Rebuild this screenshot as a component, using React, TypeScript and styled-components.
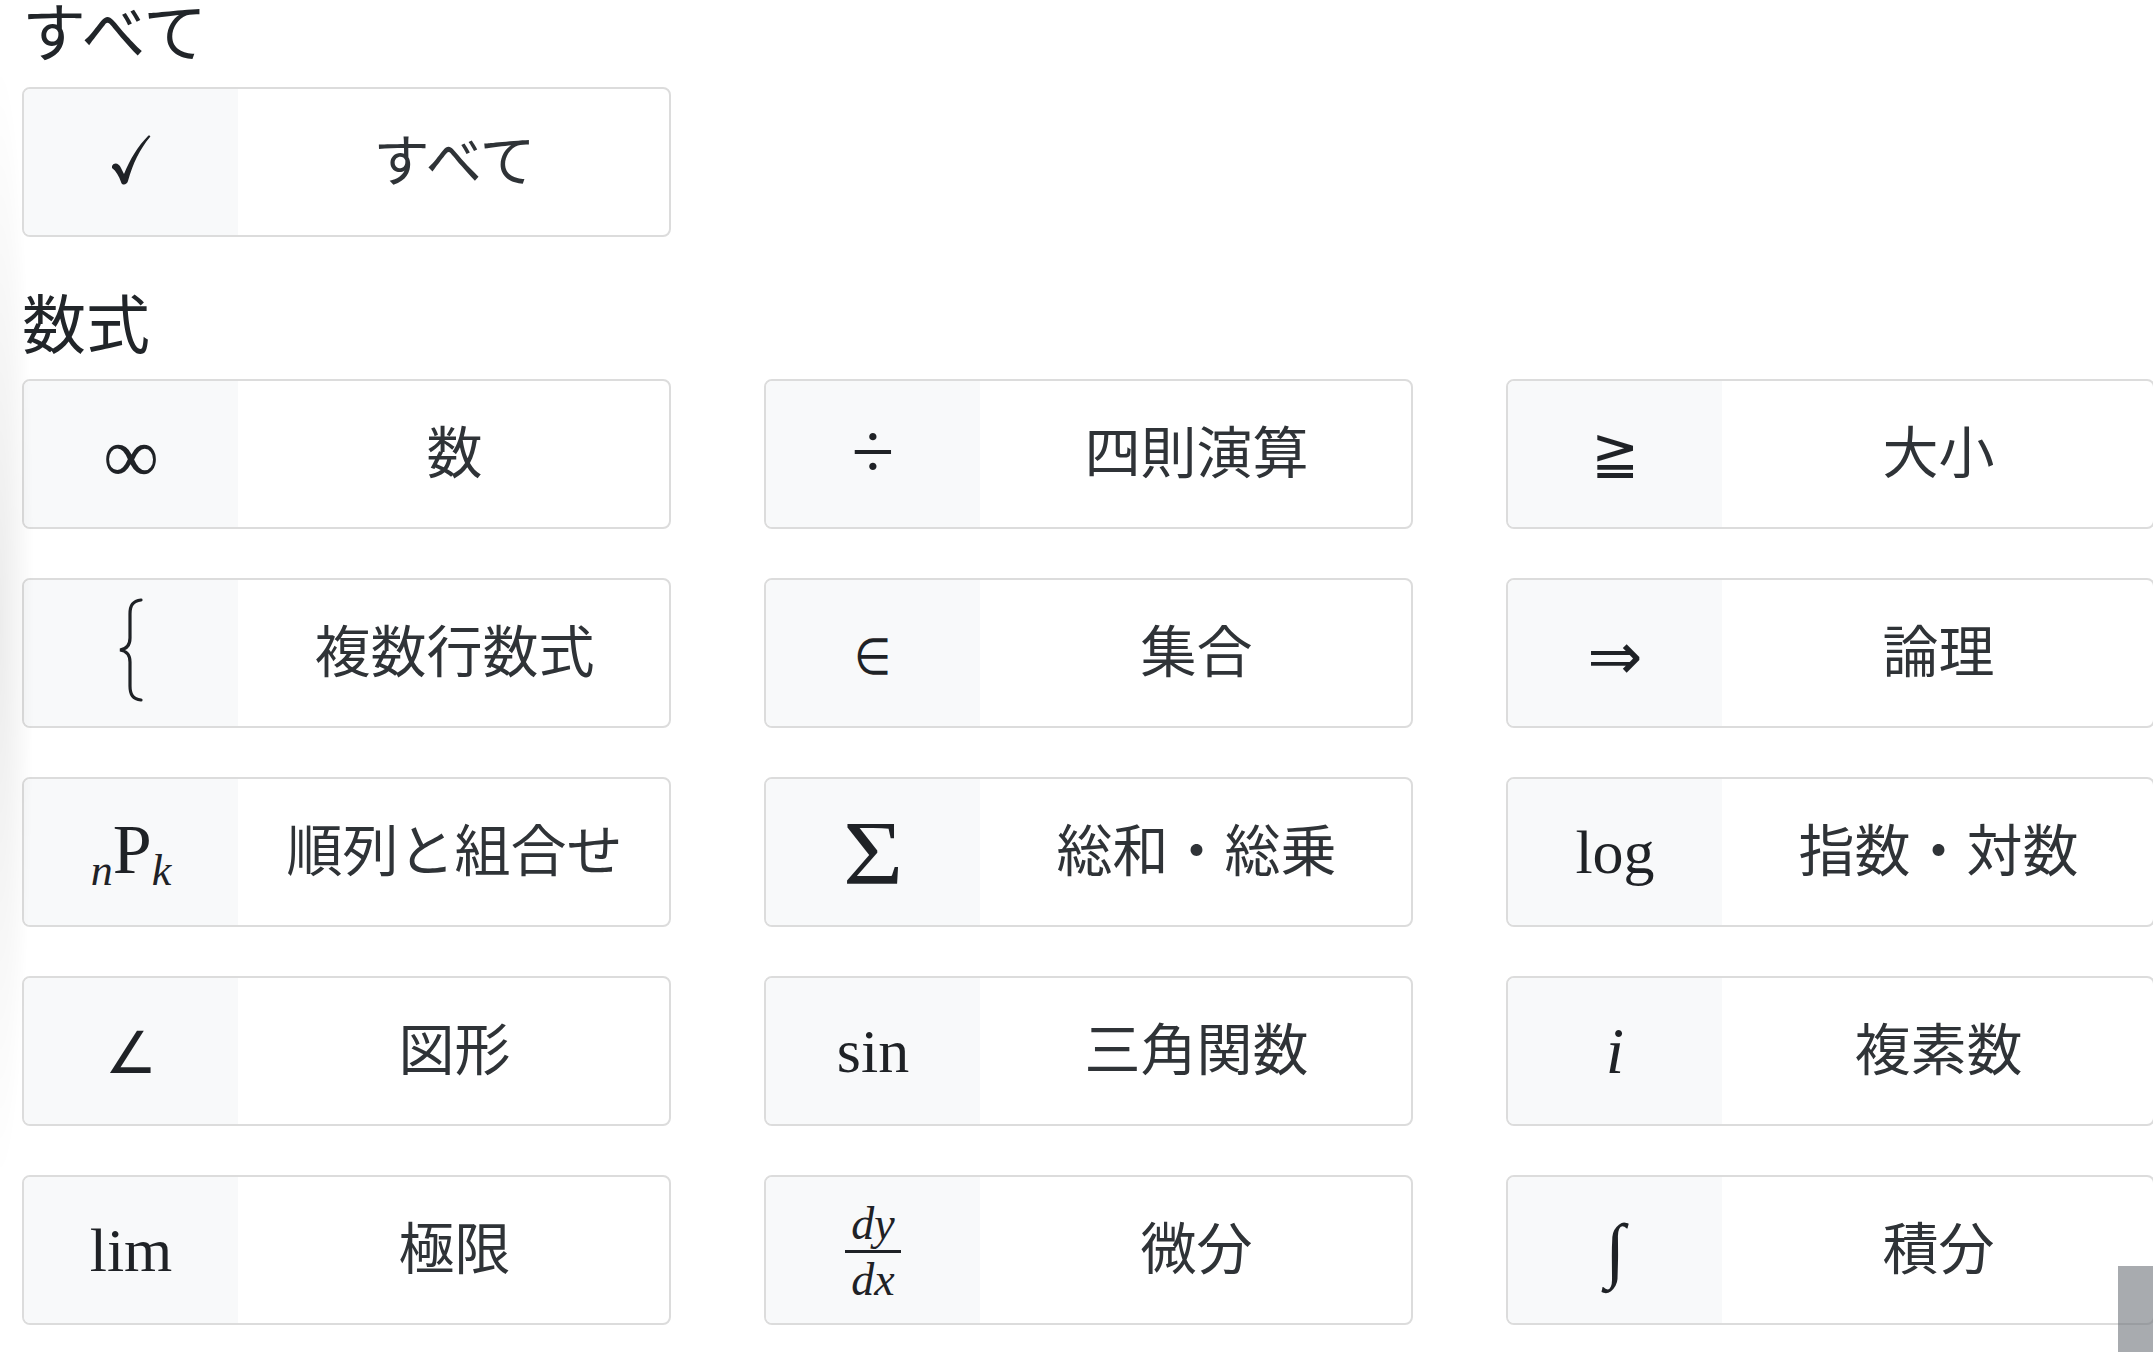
import React from "react";
import styled, { createGlobalStyle } from "styled-components";

const GlobalStyle = createGlobalStyle`
  html, body {
    margin: 0;
    padding: 0;
    background: #fff;
    overflow: hidden;
  }
  body {
    font-family: "Noto Sans CJK JP", "Noto Sans", sans-serif;
    color: #212529;
  }
`;

const Page = styled.div`
  padding: 0 0 0 22px;
  margin-top: -10px;
  width: 2200px;
`;

const Section = styled.section`
  margin-bottom: 45px;
`;

const Heading = styled.h4`
  margin: 0 0 20px;
  font-size: 64px;
  line-height: 1.2;
  font-weight: 400;
  color: #212529;
`;

const Grid = styled.div`
  display: grid;
  grid-template-columns: repeat(3, 649px);
  column-gap: 93px;
  row-gap: 49px;
`;

const Card = styled.div`
  box-sizing: border-box;
  height: 150px;
  display: grid;
  grid-template-columns: 214px 1fr;
  border: 2px solid #dcdcdc;
  border-radius: 8px;
  overflow: hidden;
  background: #fff;
`;

const IconCell = styled.div`
  background: #f8f9fa;
  display: flex;
  align-items: center;
  justify-content: center;
  color: #1f2226;
`;

const Label = styled.div`
  display: flex;
  align-items: center;
  justify-content: center;
  padding: 0 0 10px 2px;
  font-size: 56px;
  color: #2f3337;
  white-space: nowrap;
`;

const Sym = styled.span<{
  $size?: number;
  $italic?: boolean;
  $sans?: boolean;
  $dy?: number;
  $sx?: number;
}>`
  font-family: ${(p) =>
    p.$sans ? '"DejaVu Sans", sans-serif' : '"Liberation Serif", "DejaVu Serif", serif'};
  font-size: ${(p) => p.$size ?? 62}px;
  font-style: ${(p) => (p.$italic ? "italic" : "normal")};
  line-height: 1;
  display: inline-block;
  transform: translateY(${(p) => p.$dy ?? 0}px) scaleX(${(p) => p.$sx ?? 1});
`;

const Perm = styled.span`
  font-family: "Liberation Serif", "DejaVu Serif", serif;
  display: inline-flex;
  align-items: baseline;
  line-height: 1;
  transform: translateY(-2px);
`;

const Big = styled.span`
  font-size: 70px;
`;

const Sub = styled.span`
  font-size: 44px;
  font-style: italic;
  transform: translateY(12px);
`;

const Frac = styled.span`
  display: inline-flex;
  flex-direction: column;
  align-items: center;
  font-family: "Liberation Serif", "DejaVu Serif", serif;
  font-style: italic;
  font-size: 46px;
  line-height: 0.9;
  transform: translateY(2px);
`;

const FracPart = styled.span`
  padding: 0 6px;
`;

const FracBar = styled.span`
  align-self: stretch;
  height: 3px;
  background: #1f2226;
  margin: 6px 0 6px;
`;

const ScrollThumb = styled.div`
  position: fixed;
  right: 0;
  bottom: 0;
  width: 35px;
  height: 86px;
  background: rgba(110, 115, 122, 0.6);
  pointer-events: none;
`;

const EdgeShade = styled.div`
  position: fixed;
  left: 0;
  top: 0;
  bottom: 0;
  width: 40px;
  background: radial-gradient(ellipse 34px 560px at 0 46%, rgba(0, 0, 0, 0.075), rgba(0, 0, 0, 0));
  pointer-events: none;
`;

const Brace = () => (
  <svg width="30" height="104" viewBox="0 0 30 104" fill="none" style={{ marginTop: -6 }}>
    <path
      d="M25 2 C17 3 14 7 14 16 L14 40 C14 47 11 51 4 52 C11 53 14 57 14 64 L14 88 C14 97 17 101 25 102"
      stroke="#1f2226"
      strokeWidth="3.2"
      strokeLinecap="round"
    />
  </svg>
);

const Check = () => (
  <svg width="40" height="50" viewBox="0 0 40 50" style={{ marginTop: -4 }}>
    <path
      d="M1 31 C3 27 8 28 10 33 L13 39 C19 24 27 11 37 1 C38 0 40 1 39 2 C29 14 22 28 17 46 C16 50 11 51 10 47 C8 41 5 36 1 33 Z"
      fill="#1f2226"
    />
  </svg>
);

type Item = { icon: React.ReactNode; label: string };

const items: Item[] = [
  { icon: <Sym $size={78} $dy={2}>∞</Sym>, label: "数" },
  { icon: <Sym $size={78} $dy={-2}>÷</Sym>, label: "四則演算" },
  { icon: <Sym $size={60} $sans $dy={-2} $sx={0.95}>≧</Sym>, label: "大小" },
  { icon: <Brace />, label: "複数行数式" },
  { icon: <Sym $size={50} $sans $dy={4} $sx={0.85}>∈</Sym>, label: "集合" },
  { icon: <Sym $size={66} $sans $dy={4}>⇒</Sym>, label: "論理" },
  {
    icon: (
      <Perm>
        <Sub>n</Sub>
        <Big>P</Big>
        <Sub>k</Sub>
      </Perm>
    ),
    label: "順列と組合せ",
  },
  { icon: <Sym $size={90} $dy={2} $sx={1.15}>Σ</Sym>, label: "総和・総乗" },
  { icon: <Sym $size={62}>log</Sym>, label: "指数・対数" },
  { icon: <Sym $size={58} $sans $dy={2}>∠</Sym>, label: "図形" },
  { icon: <Sym $size={62}>sin</Sym>, label: "三角関数" },
  { icon: <Sym $size={66} $italic>i</Sym>, label: "複素数" },
  { icon: <Sym $size={62}>lim</Sym>, label: "極限" },
  {
    icon: (
      <Frac>
        <FracPart>dy</FracPart>
        <FracBar />
        <FracPart>dx</FracPart>
      </Frac>
    ),
    label: "微分",
  },
  { icon: <Sym $size={72} $italic>∫</Sym>, label: "積分" },
];

const Tile = ({ icon, label }: Item) => (
  <Card>
    <IconCell>{icon}</IconCell>
    <Label>{label}</Label>
  </Card>
);

export default function App() {
  return (
    <>
      <GlobalStyle />
      <Page>
        <Section>
          <Heading>すべて</Heading>
          <Grid>
            <Tile icon={<Check />} label="すべて" />
          </Grid>
        </Section>
        <Section>
          <Heading>数式</Heading>
          <Grid>
            {items.map((it) => (
              <Tile key={it.label} icon={it.icon} label={it.label} />
            ))}
          </Grid>
        </Section>
      </Page>
      <EdgeShade />
      <ScrollThumb />
    </>
  );
}
